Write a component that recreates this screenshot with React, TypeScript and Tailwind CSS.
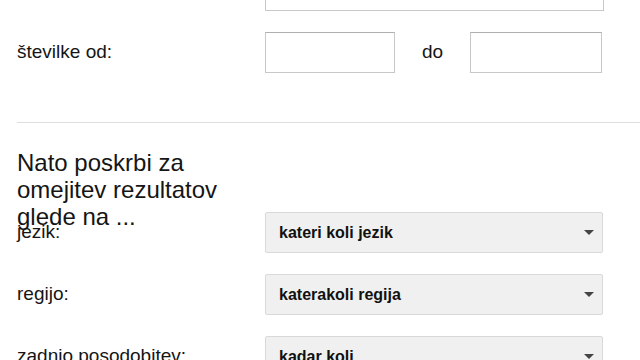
import React from 'react';

const Select = ({ value }: { value: string }) => (
  <div className="flex h-[41px] w-[338px] items-center justify-between rounded-[2px] border border-[#d9d9d9] bg-[#f0f0f0] pl-[13px] pr-[8px]">
    <span className="text-[16px] font-bold text-[#111]">{value}</span>
    <span className="h-0 w-0 border-x-[5px] border-t-[5px] border-x-transparent border-t-[#444]" />
  </div>
);

const Row = ({ label, children }: { label: string; children: React.ReactNode }) => (
  <div className="flex items-center">
    <div className="w-[248px] text-[19px] text-[#151515]">{label}</div>
    {children}
  </div>
);

export default function App() {
  return (
    <div className="h-[360px] w-[640px] overflow-hidden bg-white font-['Liberation_Sans',Arial,sans-serif]">
      <div className="-mt-[30px] pl-[17px]">
        {/* Previous row, cut off at the top */}
        <Row label="">
          <div className="h-[41px] w-[339px] border border-[#c8c8c8] border-t-[#b0b0b0] bg-white" />
        </Row>

        {/* Number range */}
        <div className="mt-[21px]">
          <Row label="številke od:">
            <div className="flex items-center gap-[27px]">
              <div className="h-[41px] w-[130px] border border-[#c8c8c8] border-t-[#b0b0b0] bg-white" />
              <span className="text-[19px] text-[#151515]">do</span>
              <div className="h-[41px] w-[132px] border border-[#c8c8c8] border-t-[#b0b0b0] bg-white" />
            </div>
          </Row>
        </div>

        <div className="mt-[49px] h-px bg-[#dedede]" />

        {/* Narrow results section */}
        <h2 className="mt-[26px] -mb-[18px] w-[230px] text-[24px] leading-[27px] text-[#151515]">
          Nato poskrbi za omejitev rezultatov glede na ...
        </h2>

        <div className="flex flex-col gap-[21px]">
          <Row label="jezik:">
            <Select value="kateri koli jezik" />
          </Row>
          <Row label="regijo:">
            <Select value="katerakoli regija" />
          </Row>
          <Row label="zadnjo posodobitev:">
            <Select value="kadar koli" />
          </Row>
        </div>
      </div>
    </div>
  );
}
